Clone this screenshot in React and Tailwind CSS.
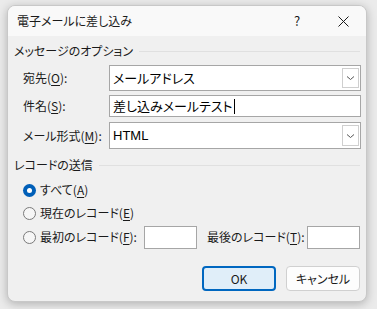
import React from "react";

const font = {
  fontFamily: '"Noto Sans CJK JP", "Noto Sans", sans-serif',
};

function Key({ children }) {
  return <span className="underline underline-offset-2">{children}</span>;
}

function ComboBox({ value }) {
  return (
    <div className="flex h-full flex-1 items-stretch border border-[#a6a6a6] bg-white">
      <div className="flex flex-1 items-center pl-[3px] text-[13px] text-black">{value}</div>
      <div className="my-[2px] mr-[1px] flex w-[17px] items-center justify-center border border-[#cfcfcf] bg-white">
        <svg width="9" height="6" viewBox="0 0 9 6">
          <path d="M1 1.5 L4.5 4.5 L8 1.5" fill="none" stroke="#555" strokeWidth="1" />
        </svg>
      </div>
    </div>
  );
}

function GroupHeader({ title }) {
  return (
    <div className="flex h-[16px] items-center gap-[6px] pr-[6px]">
      <span className="whitespace-nowrap text-[12px] text-[#1a1a1a]">{title}</span>
      <div className="h-px flex-1 bg-[#e0e0e0]" />
    </div>
  );
}

function Radio({ checked }) {
  return checked ? (
    <span className="flex h-[13px] w-[13px] shrink-0 items-center justify-center rounded-full bg-[#005fb8]">
      <span className="h-[5px] w-[5px] rounded-full bg-white" />
    </span>
  ) : (
    <span className="h-[13px] w-[13px] shrink-0 rounded-full border border-[#7a7a7a] bg-[#f6f6f6]" />
  );
}

function Label({ children }) {
  return (
    <span className="w-[95px] shrink-0 whitespace-nowrap pl-[9px] text-[12px] text-[#1a1a1a]">
      {children}
    </span>
  );
}

export default function App() {
  return (
    <div
      className="h-[309px] w-[377px] overflow-hidden bg-[#ebebeb] pl-[7px] pt-[5px] [font-feature-settings:'palt']"
      style={font}
    >
      <div className="flex h-[297px] w-[360px] flex-col overflow-hidden rounded-lg border border-[#c8c8c8] bg-[#f0f0f0] shadow-[0_2px_10px_rgba(0,0,0,0.25)]">
        {/* Title bar */}
        <div className="flex h-[30px] shrink-0 items-center bg-[#f9f9f9] pl-[9px]">
          <span className="flex-1 text-[12px] text-[#1a1a1a]">電子メールに差し込み</span>
          <span className="w-[46px] text-center text-[13px] text-[#1a1a1a]">?</span>
          <div className="flex w-[46px] items-center justify-center">
            <svg width="11" height="11" viewBox="0 0 11 11">
              <path d="M0.5 0.5 L10.5 10.5 M10.5 0.5 L0.5 10.5" stroke="#1a1a1a" strokeWidth="1" />
            </svg>
          </div>
        </div>

        {/* Body */}
        <div className="flex flex-1 flex-col pl-[6px]">
          <div className="mt-[7px]">
            <GroupHeader title="メッセージのオプション" />
          </div>

          <div className="mt-[6px] flex h-[26px] items-center pr-[5px]">
            <Label>
              宛先(<Key>O</Key>):
            </Label>
            <ComboBox value="メールアドレス" />
          </div>

          <div className="mt-[4px] flex h-[22px] items-center pr-[5px]">
            <Label>
              件名(<Key>S</Key>):
            </Label>
            <div className="flex h-full flex-1 items-center border border-[#a6a6a6] bg-white pl-[3px] text-[13px] text-black">
              差し込みメールテスト
              <span className="ml-px h-[15px] w-px bg-black" />
            </div>
          </div>

          <div className="mt-[5px] flex h-[27px] items-center pr-[5px]">
            <Label>
              メール形式(<Key>M</Key>):
            </Label>
            <ComboBox value={<span style={{ fontFamily: '"Liberation Sans", sans-serif' }}>HTML</span>} />
          </div>

          <div className="mt-[8px]">
            <GroupHeader title="レコードの送信" />
          </div>

          <div className="mt-[6px] flex h-[22px] items-center gap-[4px] pl-[9px] text-[12px] text-[#1a1a1a]">
            <Radio checked />
            <span className="whitespace-nowrap">
              すべて(<Key>A</Key>)
            </span>
          </div>

          <div className="mt-[1px] flex h-[22px] items-center gap-[4px] pl-[9px] text-[12px] text-[#1a1a1a]">
            <Radio />
            <span className="whitespace-nowrap">
              現在のレコード(<Key>E</Key>)
            </span>
          </div>

          <div className="mt-[1px] flex h-[24px] items-center pl-[9px] text-[12px] text-[#1a1a1a]">
            <Radio />
            <span className="ml-[4px] w-[104px] shrink-0 whitespace-nowrap">
              最初のレコード(<Key>F</Key>):
            </span>
            <div className="h-[23px] w-[53px] shrink-0 border border-[#a6a6a6] bg-white" />
            <span className="ml-[10px] w-[100px] shrink-0 whitespace-nowrap">
              最後のレコード(<Key>T</Key>):
            </span>
            <div className="h-[23px] w-[53px] shrink-0 border border-[#a6a6a6] bg-white" />
          </div>

          <div className="mt-[17px] flex justify-end gap-[10px] pr-[6px]">
            <button className="h-[25px] w-[74px] rounded-[4px] border-2 border-[#0067c0] bg-[#e0eef9] text-[12px] text-[#1a1a1a]">
              OK
            </button>
            <button className="h-[25px] w-[74px] rounded-[4px] border border-[#d0d0d0] bg-[#fdfdfd] text-[12px] text-[#1a1a1a]">
              キャンセル
            </button>
          </div>
        </div>
      </div>
    </div>
  );
}
